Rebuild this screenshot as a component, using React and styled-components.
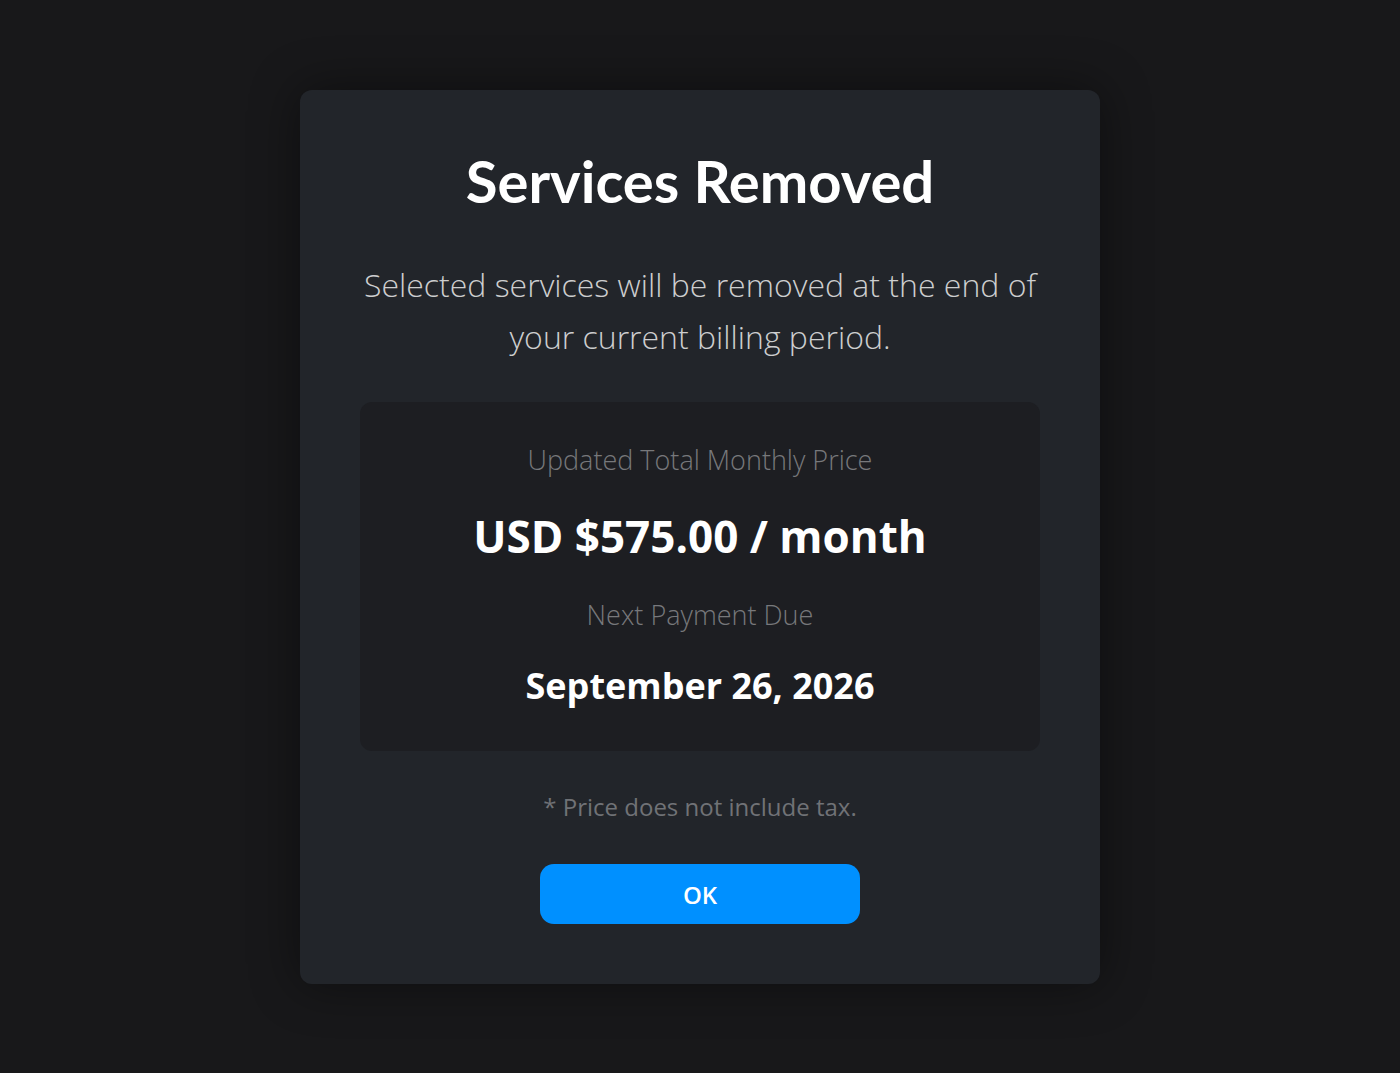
import React from "react";
import styled, { createGlobalStyle } from "styled-components";

const GlobalStyle = createGlobalStyle`
  html, body {
    margin: 0;
    padding: 0;
    background: #18181a;
  }
  body {
    font-family: "Open Sans", "Noto Sans", sans-serif;
  }
`;

export default function App() {
  return (
    <>
      <GlobalStyle />
      <Page>
        <Modal>
          <Title>Services Removed</Title>
          <Message>
            Selected services will be removed at the end of your current billing
            period.
          </Message>
          <Summary>
            <Label>Updated Total Monthly Price</Label>
            <Value size="big">USD $575.00 / month</Value>
            <Label>Next Payment Due</Label>
            <Value>September 26, 2026</Value>
          </Summary>
          <Note>* Price does not include tax.</Note>
          <OkButton>OK</OkButton>
        </Modal>
      </Page>
    </>
  );
}

const Page = styled.div`
  min-height: 1073px;
  display: flex;
  justify-content: center;
  align-items: flex-start;
  padding-top: 90px;
  box-sizing: border-box;
`;

const Modal = styled.div`
  width: 800px;
  box-sizing: border-box;
  padding: 56px 60px 60px;
  background: #22252a;
  border-radius: 12px;
  box-shadow: 0 0 50px rgba(0, 0, 0, 0.45);
  display: flex;
  flex-direction: column;
  align-items: center;
  text-align: center;
`;

const Title = styled.h1`
  margin: 0;
  font-family: Lato, "Open Sans", sans-serif;
  font-weight: 700;
  font-size: 58px;
  line-height: 70px;
  color: #ffffff;
`;

const Message = styled.p`
  margin: 43px 0 0;
  font-size: 32px;
  font-weight: 300;
  line-height: 52px;
  color: #cdcecf;
  max-width: 680px;
`;

const Summary = styled.div`
  margin-top: 39px;
  width: 100%;
  box-sizing: border-box;
  padding: 36px 20px 39px;
  background: #1d1e22;
  border-radius: 12px;
  display: flex;
  flex-direction: column;
  align-items: center;
`;

const Label = styled.div`
  font-size: 27px;
  font-weight: 300;
  line-height: 44px;
  color: #77787b;
`;

const Value = styled.div`
  font-weight: 700;
  font-size: ${(p) => (p.size === "big" ? "44px" : "36px")};
  line-height: ${(p) => (p.size === "big" ? "64px" : "52px")};
  margin: ${(p) => (p.size === "big" ? "22px 0 25px" : "23px 0 0")};
  color: #ffffff;
`;

const Note = styled.div`
  margin-top: 40px;
  font-size: 24px;
  font-weight: 400;
  line-height: 32px;
  color: #707276;
`;

const OkButton = styled.button`
  margin-top: 41px;
  width: 320px;
  height: 60px;
  border: none;
  border-radius: 14px;
  background: #0090ff;
  color: #ffffff;
  font-family: "Open Sans", "Noto Sans", sans-serif;
  font-weight: 600;
  font-size: 24px;
  cursor: pointer;
`;
